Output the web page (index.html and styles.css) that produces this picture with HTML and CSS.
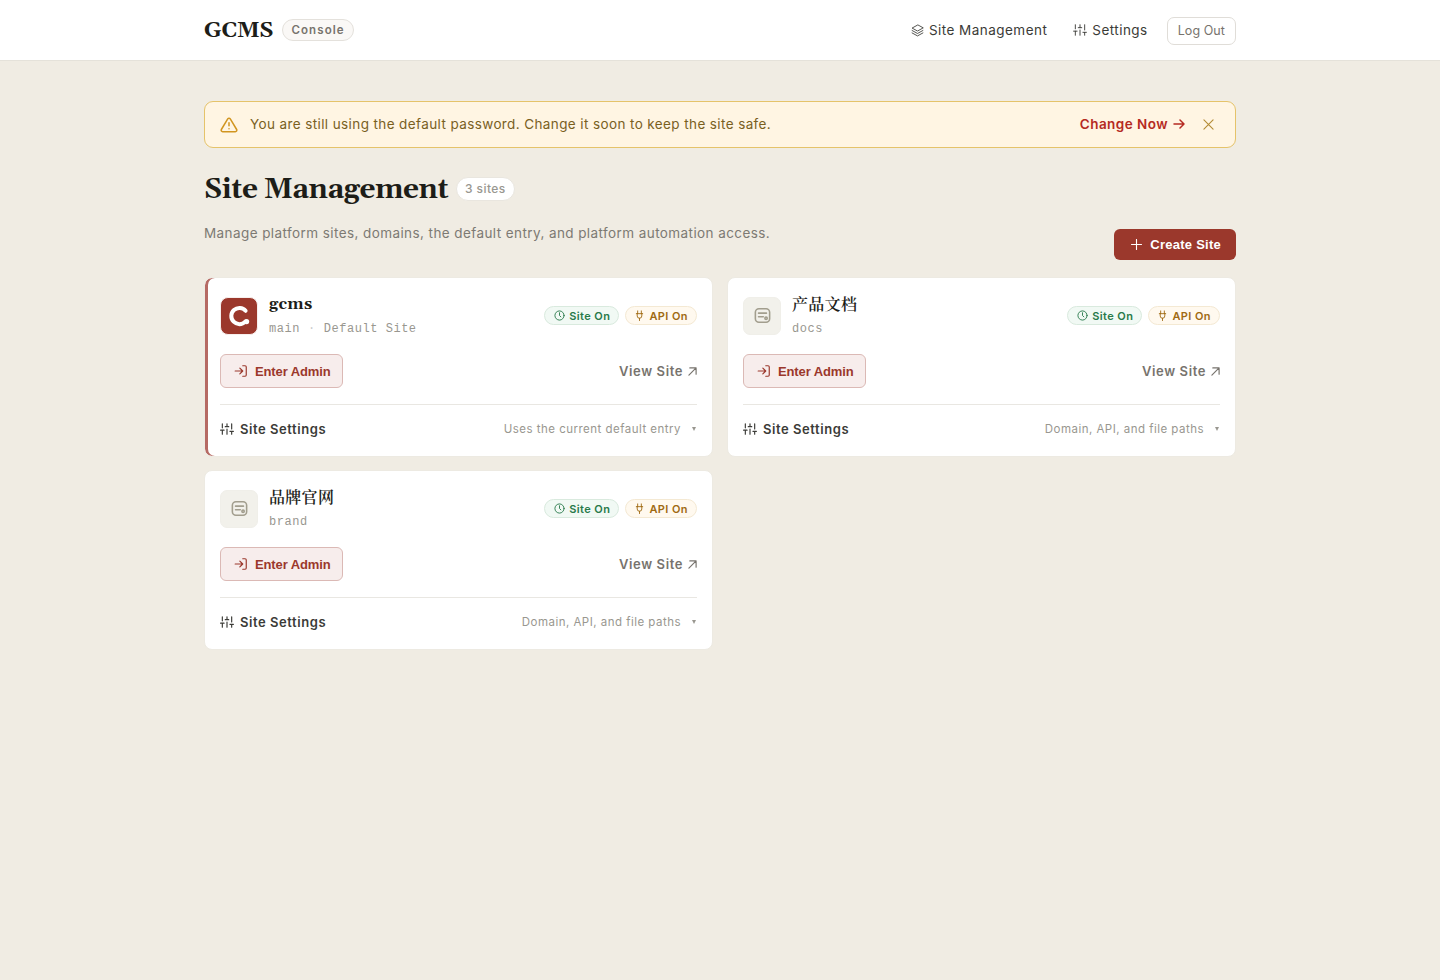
FILE: index.html
```
<!DOCTYPE html>
<html lang="en">
<head>
	<meta charset="utf-8">
	<title>GCMS Console</title>
	<link rel="stylesheet" href="styles.css">
</head>
<body>
	<!-- shared icons -->
	<svg class="sprite" width="0" height="0">
		<symbol id="i-layers" viewBox="0 0 24 24"><path d="M12 2 2 7.5l10 5.500 10-5.500zM2 12l10 5.500L22 12M2 16.500 12 22l10-5.500"/></symbol>
		<symbol id="i-sliders" viewBox="0 0 24 24"><path d="M4 21v-7M4 10V3M12 21v-9M12 8V3M20 21v-5M20 12V3M1 14h6M9 8h6M17 16h6"/></symbol>
		<symbol id="i-warn" viewBox="0 0 24 24"><path d="M10.300 3.900 1.800 18a2 2 0 0 0 1.700 3h17a2 2 0 0 0 1.700-3L13.700 3.900a2 2 0 0 0-3.400 0zM12 9v4M12 17v.1"/></symbol>
		<symbol id="i-enter" viewBox="0 0 24 24"><path d="M15 3h4a2 2 0 0 1 2 2v14a2 2 0 0 1-2 2h-4M10 17l5-5-5-5M15 12H2"/></symbol>
		<symbol id="i-clock" viewBox="0 0 24 24"><circle cx="12" cy="12" r="10"/><path d="M12 6v6l3 3"/></symbol>
		<symbol id="i-plug" viewBox="0 0 24 24"><path d="M8 2v6M16 2v6M5 8h14M7 8v5a5 5 0 0 0 10 0V8M12 18v5"/></symbol>
		<symbol id="i-up" viewBox="0 0 10 10"><path d="M1 9 9 1M2 1h7v7"/></symbol>
		<symbol id="i-site" viewBox="0 0 24 24"><rect x="3" y="3.500" width="18" height="17" rx="4.500"/><path d="M7 9h10M7 13.500h6"/><circle cx="16.500" cy="15.500" r="1.500"/></symbol>
	</svg>

	<header class="topbar">
		<div class="wrap topbar-in">
			<div class="brand">
				<span class="logo">GCMS</span>
				<span class="tag">Console</span>
			</div>
			<nav class="nav">
				<a href="#" class="nav-site"><svg class="ic"><use href="#i-layers"/></svg>Site Management</a>
				<a href="#" class="nav-set"><svg class="ic"><use href="#i-sliders"/></svg>Settings</a>
				<a href="#" class="logout">Log Out</a>
			</nav>
		</div>
	</header>

	<main class="wrap">
		<div class="notice">
			<svg class="ic warn"><use href="#i-warn"/></svg>
			<p>You are still using the default password. Change it soon to keep the site safe.</p>
			<a href="#" class="change">Change Now<svg class="ic arrow" viewBox="0 0 12 12"><path d="M1 6h10M7 2l4 4-4 4"/></svg></a>
			<svg class="ic close" viewBox="0 0 12 12"><path d="M1 1l10 10M11 1 1 11"/></svg>
		</div>

		<div class="title">
			<h1>Site Management</h1>
			<span class="count">3 sites</span>
		</div>
		<div class="sub">
			<p>Manage platform sites, domains, the default entry, and platform automation access.</p>
			<button class="create"><svg class="ic" viewBox="0 0 12 12"><path d="M6 .5v11M.5 6h11"/></svg>Create Site</button>
		</div>

		<div class="grid">
			<section class="card default">
				<div class="head">
					<div class="icon logo-icon">
						<svg viewBox="0 0 36 36"><path d="M24.600 12.800A8.100 8.100 0 1 0 24.300 23.600"/><circle cx="25.600" cy="23.600" r="2.600"/></svg>
					</div>
					<div class="info">
						<h2>gcms</h2>
						<p class="slug">main<i>·</i>Default Site</p>
					</div>
					<div class="badges">
						<span class="badge on"><svg class="ic"><use href="#i-clock"/></svg>Site On</span>
						<span class="badge api"><svg class="ic"><use href="#i-plug"/></svg>API On</span>
					</div>
				</div>
				<div class="actions">
					<button class="enter"><svg class="ic"><use href="#i-enter"/></svg>Enter Admin</button>
					<a href="#" class="view">View Site<svg class="ic"><use href="#i-up"/></svg></a>
				</div>
				<div class="foot">
					<span class="set"><svg class="ic"><use href="#i-sliders"/></svg>Site Settings</span>
					<span class="hint">Uses the current default entry<b></b></span>
				</div>
			</section>

			<section class="card">
				<div class="head">
					<div class="icon"><svg class="ic"><use href="#i-site"/></svg></div>
					<div class="info">
						<h2 class="cn">产品文档</h2>
						<p class="slug">docs</p>
					</div>
					<div class="badges">
						<span class="badge on"><svg class="ic"><use href="#i-clock"/></svg>Site On</span>
						<span class="badge api"><svg class="ic"><use href="#i-plug"/></svg>API On</span>
					</div>
				</div>
				<div class="actions">
					<button class="enter"><svg class="ic"><use href="#i-enter"/></svg>Enter Admin</button>
					<a href="#" class="view">View Site<svg class="ic"><use href="#i-up"/></svg></a>
				</div>
				<div class="foot">
					<span class="set"><svg class="ic"><use href="#i-sliders"/></svg>Site Settings</span>
					<span class="hint">Domain, API, and file paths<b></b></span>
				</div>
			</section>

			<section class="card">
				<div class="head">
					<div class="icon"><svg class="ic"><use href="#i-site"/></svg></div>
					<div class="info">
						<h2 class="cn">品牌官网</h2>
						<p class="slug">brand</p>
					</div>
					<div class="badges">
						<span class="badge on"><svg class="ic"><use href="#i-clock"/></svg>Site On</span>
						<span class="badge api"><svg class="ic"><use href="#i-plug"/></svg>API On</span>
					</div>
				</div>
				<div class="actions">
					<button class="enter"><svg class="ic"><use href="#i-enter"/></svg>Enter Admin</button>
					<a href="#" class="view">View Site<svg class="ic"><use href="#i-up"/></svg></a>
				</div>
				<div class="foot">
					<span class="set"><svg class="ic"><use href="#i-sliders"/></svg>Site Settings</span>
					<span class="hint">Domain, API, and file paths<b></b></span>
				</div>
			</section>
		</div>
	</main>
</body>
</html>
```
FILE: styles.css
```
*{
	box-sizing: border-box;
	margin: 0;
	padding: 0;
}
body{
	min-height: 100vh;
	background: #f0ece3;
	color: #1d1d18;
	font-family: Inter, "Noto Sans CJK SC", sans-serif;
	font-size: 13.5px;
	letter-spacing: .39px;
}
a{
	color: inherit;
	text-decoration: none;
}
.sprite{
	position: absolute;
}
.ic{
	flex: none;
	width: 14px;
	height: 14px;
	fill: none;
	stroke: currentColor;
	stroke-width: 2;
	stroke-linecap: round;
	stroke-linejoin: round;
}
.wrap{
	width: 1032px;
	margin: 0 auto;
}

/* top bar */
.topbar{
	height: 61px;
	background: #fff;
	border-bottom: 1px solid #e5e2da;
}
.topbar-in{
	display: flex;
	align-items: center;
	justify-content: space-between;
	height: 60px;
}
.brand, .nav, .nav a{
	display: flex;
	align-items: center;
}
.logo{
	padding-top: 2px;
	font: bold 22px/30px Georgia, Gelasio, "Liberation Serif", serif;
	letter-spacing: -.22px;
}
.tag{
	height: 22px;
	margin-left: 9px;
	padding: 0 8px;
	border: 1px solid #e4e1dc;
	border-radius: 11px;
	background: #faf8f6;
	color: #77736d;
	font-size: 11.5px;
	font-weight: 600;
	line-height: 20px;
	letter-spacing: 1.1px;
}
.nav{
	color: #3b3b37;
	letter-spacing: .46px;
}
.nav .ic{
	margin-right: 5px;
	stroke-width: 1.6;
}
.nav-site .ic{
	width: 13px;
	height: 13px;
}
.nav-set{
	margin-left: 26px;
}
.nav .logout{
	height: 28px;
	margin: 1px 0 0 19px;
	padding: 0 10px;
	border: 1px solid #e0ddd8;
	border-radius: 7px;
	color: #77736d;
	font-size: 12.5px;
	letter-spacing: .08px;
}

/* password notice */
.notice{
	display: flex;
	align-items: center;
	height: 47px;
	margin-top: 40px;
	padding: 0 21px 0 15px;
	border: 1px solid #e5c36a;
	border-radius: 9px;
	background: #fff5e3;
	color: #79601f;
}
.notice p{
	flex: 1;
	margin-left: 12px;
	padding-bottom: 2px;
}
.warn{
	width: 18px;
	height: 18px;
	color: #d19520;
}
.change{
	display: flex;
	align-items: center;
	padding-bottom: 2px;
	color: #b52a22;
	font-weight: 600;
	letter-spacing: .46px;
}
.arrow{
	width: 12px;
	height: 12px;
	margin-left: 5px;
	stroke-width: 1.5;
}
.close{
	width: 11px;
	height: 11px;
	margin-left: 18px;
	color: #b38b35;
	stroke-width: 1.2;
}

/* page title */
.title{
	display: flex;
	align-items: center;
	height: 40px;
	margin-top: 21px;
}
.title h1{
	padding-top: 2px;
	font: bold 28px/40px Georgia, Gelasio, "Liberation Serif", serif;
	letter-spacing: -.44px;
}
.count{
	height: 24px;
	margin-left: 8px;
	padding: 0 8px;
	border: 1px solid #e9e6df;
	border-radius: 12px;
	background: #fff;
	color: #999790;
	font-size: 12px;
	font-weight: 500;
	line-height: 22px;
}
.sub{
	display: flex;
	justify-content: space-between;
	height: 36px;
	margin-top: 14px;
	color: #7d7a73;
	line-height: 21px;
	letter-spacing: .415px;
}
.create{
	display: flex;
	align-items: center;
	align-self: flex-end;
	height: 31px;
	margin-bottom: -1px;
	padding: 0 15px 0 17px;
	border: 0;
	border-radius: 6px;
	background: #9b382c;
	color: #fff;
	font: bold 13px "Liberation Sans", sans-serif;
	letter-spacing: .25px;
}
.create .ic{
	width: 11px;
	height: 11px;
	margin-right: 8px;
	stroke-width: 1.2;
}

/* site cards */
.grid{
	display: grid;
	grid-template-columns: 1fr 1fr;
	gap: 13px 14px;
	margin-top: 18px;
}
.card{
	height: 180px;
	padding: 18px 15px 0;
	border: 1px solid #edeae2;
	border-radius: 8px;
	background: #fff;
}
.default{
	box-shadow: inset 3px 0 0 #b66a64;
}
.head{
	display: flex;
	align-items: center;
	height: 39px;
}
.icon{
	display: flex;
	align-items: center;
	justify-content: center;
	width: 38px;
	height: 38px;
	border: 1px solid #f0efe9;
	border-radius: 7px;
	background: #f2f1eb;
	color: #a29e8e;
}
.icon .ic{
	width: 19px;
	height: 19px;
}
.logo-icon{
	border-color: #f7efed;
	border-radius: 8px;
	background: #9b382c;
}
.logo-icon svg{
	width: 36px;
	height: 36px;
	fill: none;
	stroke: #fff;
	stroke-width: 4;
	stroke-linecap: round;
}
.logo-icon circle{
	fill: #fff;
	stroke: none;
}
.info{
	flex: 1;
	margin-left: 11px;
}
.info h2{
	font: bold 16px/24px Georgia, Gelasio, "Noto Serif CJK SC", "Noto Sans CJK SC", serif;
	letter-spacing: .3px;
}
.info .cn{
	padding-top: 2px;
	font-weight: 600;
	line-height: 22px;
}
.slug{
	margin-top: 3px;
	color: #999790;
	font: 12px/20px "Liberation Mono", monospace;
	letter-spacing: .54px;
}
.slug i{
	margin: 0 8px;
	color: #ccc;
	font-style: normal;
}
.badges{
	display: flex;
	gap: 6px;
}
.badge{
	display: flex;
	align-items: center;
	height: 19px;
	padding: 0 8px 0 9px;
	border: 1px solid;
	border-radius: 10px;
	font-size: 11px;
	font-weight: 600;
	letter-spacing: .42px;
}
.badge .ic{
	width: 11px;
	height: 11px;
	margin-right: 4px;
}
.on{
	border-color: #d9eade;
	background: #f1f9f4;
	color: #28794a;
}
.api{
	padding-left: 8px;
	border-color: #f4e9d3;
	background: #fff9ef;
	color: #a06a13;
}
.actions{
	display: flex;
	align-items: center;
	justify-content: space-between;
	margin-top: 19px;
}
.enter{
	display: flex;
	align-items: center;
	height: 34px;
	padding: 0 12px 0 13px;
	border: 1px solid #dbb9b5;
	border-radius: 6px;
	background: #f7edec;
	color: #9b382c;
	font: bold 13px "Liberation Sans", sans-serif;
	letter-spacing: -.12px;
}
.enter .ic{
	margin-right: 7px;
}
.view{
	display: flex;
	align-items: center;
	color: #77736d;
	font-size: 13px;
	font-weight: 600;
	letter-spacing: .6px;
}
.view .ic{
	width: 9px;
	height: 9px;
	margin-left: 5px;
	stroke-width: 1.3;
}
.foot{
	display: flex;
	align-items: center;
	justify-content: space-between;
	height: 49px;
	margin-top: 16px;
	border-top: 1px solid #e9e7e2;
}
.set{
	display: flex;
	align-items: center;
	padding-bottom: 1px;
	color: #3b3b37;
	font-size: 13px;
	font-weight: 600;
	letter-spacing: .56px;
}
.set .ic{
	margin-right: 6px;
}
.hint{
	display: flex;
	align-items: center;
	color: #999790;
	font-size: 11.5px;
	letter-spacing: .48px;
}
.hint b{
	margin: 0 1px 0 11px;
	border: 2px solid transparent;
	border-top: 4px solid #999790;
	border-bottom: 0;
}
```
